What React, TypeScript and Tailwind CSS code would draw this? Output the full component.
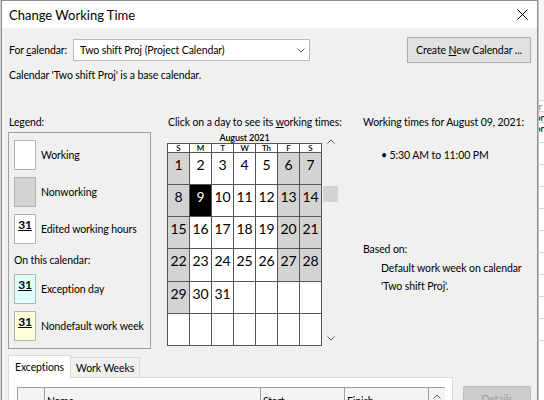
import React from 'react';

const weeks: (number | null)[][] = [
  [1, 2, 3, 4, 5, 6, 7],
  [8, 9, 10, 11, 12, 13, 14],
  [15, 16, 17, 18, 19, 20, 21],
  [22, 23, 24, 25, 26, 27, 28],
  [29, 30, 31, null, null, null, null],
  [null, null, null, null, null, null, null],
];
const rowHeights = ['h-[32px]', 'h-[32px]', 'h-[32px]', 'h-[33px]', 'h-[32px]', 'h-[32px]'];
const dayHeads = ['S', 'M', 'T', 'W', 'Th', 'F', 'S'];

function isGray(row: number, col: number, day: number | null) {
  if (day === null) return false;
  if (row < 4) return col === 0 || col === 5 || col === 6;
  return col === 0;
}

function Swatch({ bg, num, label }: { bg: string; num?: boolean; label: string }) {
  return (
    <div className="flex items-center">
      <div className={`w-[22px] h-[30px] shrink-0 border border-[#b4b4b4] flex justify-center ${bg}`}>
        {num && (
          <span className="text-[12px] font-bold leading-[14px] mt-[3px] underline underline-offset-[1px]">31</span>
        )}
      </div>
      <span className="ml-[5px] whitespace-nowrap">{label}</span>
    </div>
  );
}

function Chevron({ up }: { up?: boolean }) {
  return (
    <svg width="8" height="5" viewBox="0 0 8 5">
      <polyline
        points={up ? '0.5,4.5 4,1 7.5,4.5' : '0.5,0.5 4,4 7.5,0.5'}
        fill="none"
        stroke="#606060"
        strokeWidth="1"
      />
    </svg>
  );
}

export default function App() {
  return (
    <div className="w-[544px] h-[400px] overflow-hidden bg-white flex flex-col font-['Lato',sans-serif] text-[10.5px] tracking-[-0.1px] leading-[16px] text-black">
      {/* sheet ribbon strip behind */}
      <div className="h-[2px] flex bg-[#e6e6e6]">
        <div className="w-[3px] bg-[#217346]" />
        <div className="w-[130px]" />
        <div className="w-[6px] bg-[#d98a3a]" />
        <div className="w-[70px]" />
        <div className="w-[14px] bg-[#3b6fb6]" />
        <div className="w-[50px]" />
        <div className="w-[12px] bg-[#3b6fb6]" />
      </div>
      <div className="flex flex-1">
        <div className="w-[1px] bg-[#d0d0d0]" />

        {/* dialog */}
        <div className="w-[537px] shrink-0 border border-b-0 border-[#8c8c8c] bg-[#f0f0f0] flex flex-col">
          <div className="h-[27px] bg-white flex items-center justify-between pl-[7px] pr-[9px]">
            <span className="text-[13px] tracking-normal leading-[18px]">Change Working Time</span>
            <svg width="11" height="11" viewBox="0 0 11 11">
              <path d="M0.5 0.5 L10.5 10.5 M10.5 0.5 L0.5 10.5" stroke="#000" strokeWidth="1" />
            </svg>
          </div>

          <div className="flex flex-col px-[6px]">
            <div className="mt-[9px] h-[26px] flex items-center justify-between">
              <div className="flex items-center">
                <span className="ml-[1px] w-[64px]">
                  For <span className="underline">c</span>alendar:
                </span>
                <div className="w-[237px] h-[22px] bg-white border border-[#b9b9b9] flex items-center justify-between pl-[6px] pr-[4px]">
                  <span>Two shift Proj (Project Calendar)</span>
                  <Chevron />
                </div>
              </div>
              <div className="w-[124px] h-[26px] bg-[#e1e1e1] border border-[#adadad] flex items-center justify-center">
                <span>
                  Create <span className="underline">N</span>ew Calendar ...
                </span>
              </div>
            </div>

            <div className="mt-[4px] ml-[1px]">Calendar 'Two shift Proj' is a base calendar.</div>

            <div className="mt-[31px] flex h-[235px]">
              {/* legend */}
              <div className="w-[143px] shrink-0 flex flex-col">
                <span className="ml-[1px]">Legend:</span>
                <div className="mt-[2px] h-[217px] border border-[#a0a0a0] pl-[5px] pt-[7px] flex flex-col">
                  <Swatch bg="bg-white" label="Working" />
                  <div className="mt-[7px]">
                    <Swatch bg="bg-[#d3d3d3]" label="Nonworking" />
                  </div>
                  <div className="mt-[7px]">
                    <Swatch bg="bg-white" num label="Edited working hours" />
                  </div>
                  <span className="mt-[8px]">On this calendar:</span>
                  <div className="mt-[6px]">
                    <Swatch bg="bg-[#e0ffff]" num label="Exception day" />
                  </div>
                  <div className="mt-[7px]">
                    <Swatch bg="bg-[#ffffdc]" num label="Nondefault work week" />
                  </div>
                </div>
              </div>

              {/* calendar */}
              <div className="ml-[16px] w-[196px] shrink-0 flex flex-col">
                <span className="ml-[1px] whitespace-nowrap">
                  Click on a day to see its <span className="underline">w</span>orking times:
                </span>
                <div className="mt-[2px] flex">
                  <div className="flex flex-col">
                    <div className="h-[11px] text-center text-[9px] leading-[11px] font-semibold">August 2021</div>
                    <div className="border-l border-t border-[#555] flex flex-col">
                      <div className="flex border-b border-[#555] bg-white">
                        {dayHeads.map((d, i) => (
                          <div key={i} className="w-[22px] h-[8px] border-r border-[#555] text-center text-[8px] leading-[8px] font-semibold">
                            {d}
                          </div>
                        ))}
                      </div>
                      {weeks.map((week, r) => (
                        <div key={r} className={`flex ${rowHeights[r]}`}>
                          {week.map((day, c) => {
                            const sel = day === 9;
                            const bg = sel ? 'bg-black text-white' : isGray(r, c, day) ? 'bg-[#d3d3d3]' : 'bg-white';
                            return (
                              <div
                                key={c}
                                className={`w-[22px] border-r border-b border-[#555] flex justify-center pt-[2px] text-[14px] tracking-normal leading-[19px] ${bg}`}
                              >
                                {day}
                              </div>
                            );
                          })}
                        </div>
                      ))}
                    </div>
                  </div>
                  <div className="w-[16px] flex flex-col">
                    <div className="mt-[7px] ml-[5px]">
                      <Chevron up />
                    </div>
                    <div className="mt-[42px] ml-[1px] h-[16px] w-[15px] bg-[#d3d3d3]" />
                    <div className="mt-[134px] ml-[5px]">
                      <Chevron />
                    </div>
                  </div>
                </div>
              </div>

              {/* working times */}
              <div className="flex flex-col whitespace-nowrap">
                <span>Working times for August 09, 2021:</span>
                <span className="mt-[17px] ml-[18px]">• 5:30 AM to 11:00 PM</span>
                <span className="mt-[78px]">Based on:</span>
                <div className="mt-[2px] ml-[18px] leading-[18px] flex flex-col">
                  <span>Default work week on calendar</span>
                  <span>'Two shift Proj'.</span>
                </div>
              </div>
            </div>

            {/* tabs */}
            <div className="mt-[6px] flex">
              <div className="w-[445px] flex flex-col">
                <div className="flex items-end">
                  <div className="h-[23px] px-[6px] bg-white border border-b-0 border-[#d9d9d9] flex items-center relative z-10 -mb-px pb-[1px]">
                    Exceptions
                  </div>
                  <div className="h-[20px] px-[5px] bg-[#f0f0f0] border border-l-0 border-b-0 border-[#d9d9d9] flex items-center">
                    Work Weeks
                  </div>
                </div>
                <div className="h-[40px] bg-white border border-[#d9d9d9] pl-[8px] pt-[9px]">
                  <div className="w-[428px] h-[24px] flex border-t border-l border-[#a0a0a0] bg-[#f4f4f4]">
                    <div className="w-[27px] border-r border-[#a0a0a0]" />
                    <div className="w-[216px] border-r border-[#a0a0a0] pl-[2px] pt-[5px]">Name</div>
                    <div className="w-[84px] border-r border-[#a0a0a0] pl-[2px] pt-[5px]">Start</div>
                    <div className="w-[84px] border-r border-[#a0a0a0] pl-[2px] pt-[5px]">Finish</div>
                    <div className="flex-1 flex justify-center pt-[6px]">
                      <Chevron up />
                    </div>
                  </div>
                </div>
              </div>
              <div className="ml-[10px] mt-[31px] w-[68px] h-[26px] bg-[#cccccc] border border-[#bfbfbf] flex items-center justify-center text-[#a0a0a0]">
                Details
              </div>
            </div>
          </div>
        </div>

        {/* sheet cells behind */}
        <div className="flex-1 flex flex-col border-l border-[#c8c8c8] text-[10px] leading-[10px] overflow-hidden">
          <div className="h-[100px] bg-[#f7f7f7]" />
          <div className="h-[11px] border-t border-[#d4d4d4] text-[#7a7a7a] -ml-[4px]">tr</div>
          <div className="h-[11px] border-t border-[#d4d4d4] -ml-[4px]">or</div>
          <div className="h-[20px] border-t border-[#d4d4d4] -ml-[4px]">or</div>
          <div className="h-[22px] border-t border-[#d4d4d4]" />
          <div className="h-[22px] border-t border-[#d4d4d4]" />
          <div className="h-[22px] border-t border-[#d4d4d4]" />
          <div className="h-[22px] border-t border-[#d4d4d4]" />
          <div className="h-[22px] border-t border-[#d4d4d4]" />
          <div className="h-[22px] border-t border-[#d4d4d4]" />
          <div className="h-[22px] border-t border-[#d4d4d4]" />
          <div className="h-[22px] border-t border-[#d4d4d4]" />
          <div className="h-[22px] border-t border-[#d4d4d4]" />
          <div className="h-[22px] border-t border-[#d4d4d4]" />
        </div>
      </div>
    </div>
  );
}
